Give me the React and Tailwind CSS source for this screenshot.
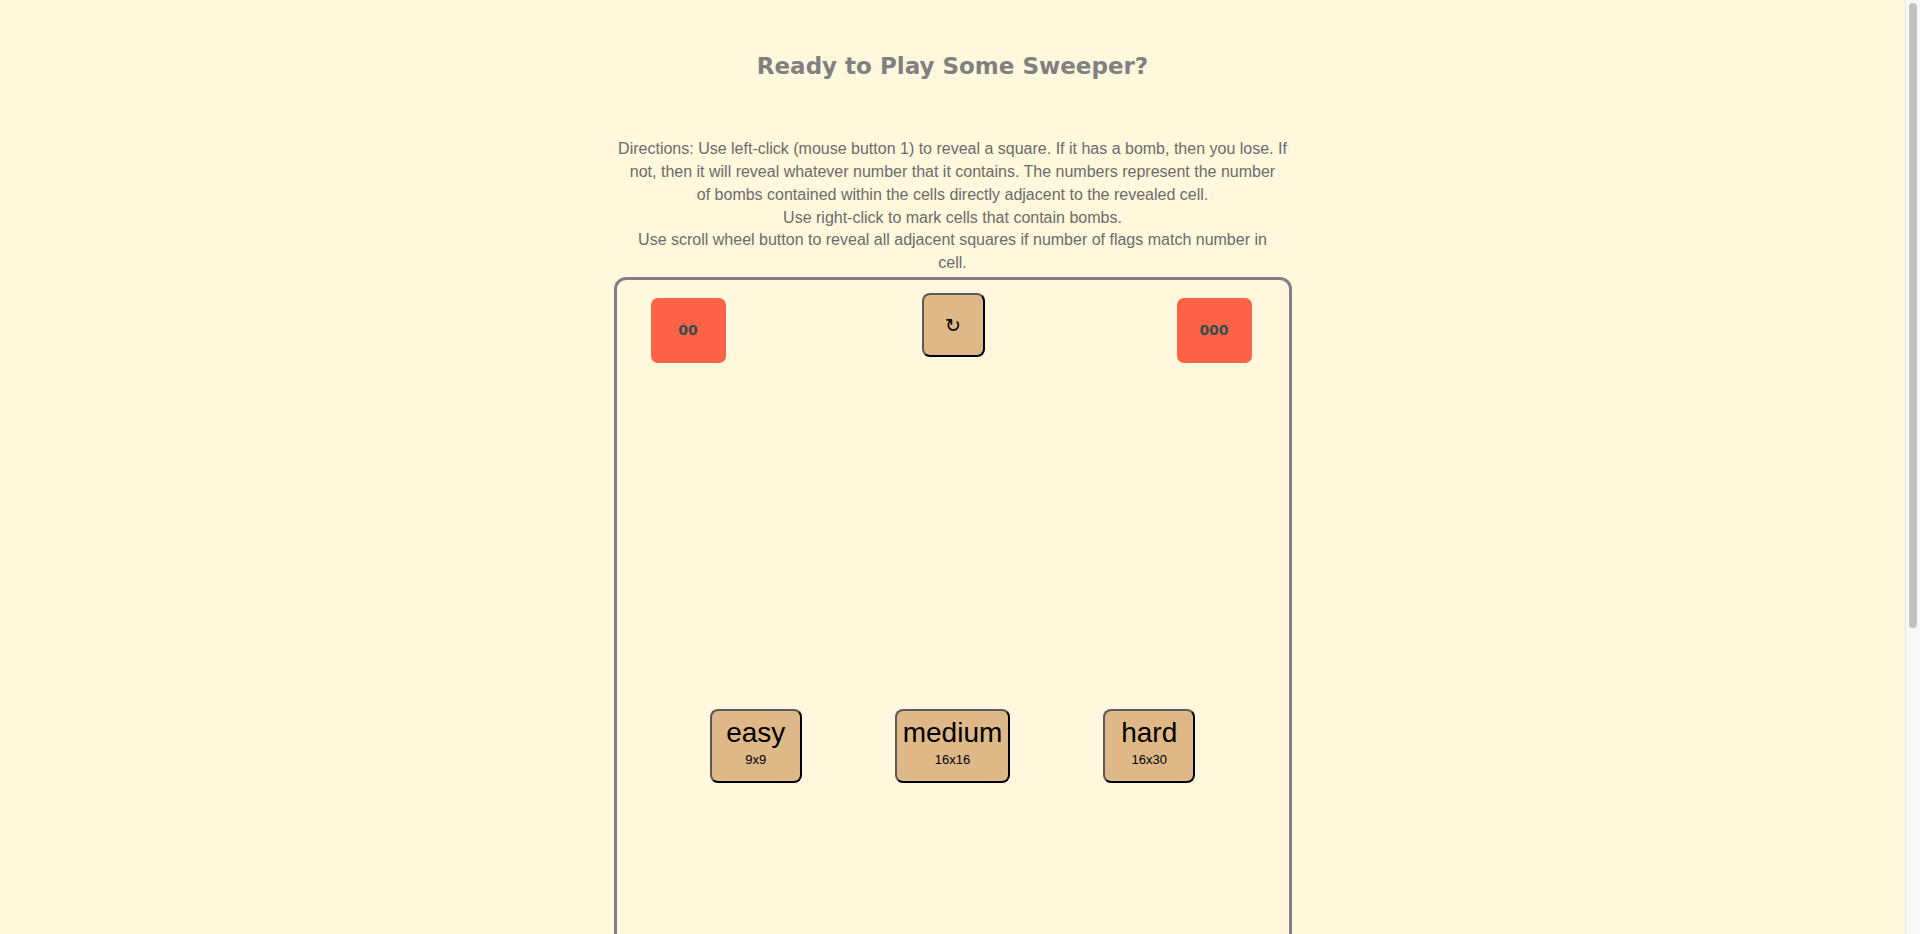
import React, { useState } from "react";

const directions = [
  "Directions: Use left-click (mouse button 1) to reveal a square. If it has a bomb, then you lose. If",
  "not, then it will reveal whatever number that it contains. The numbers represent the number",
  "of bombs contained within the cells directly adjacent to the revealed cell.",
  "Use right-click to mark cells that contain bombs.",
  "Use scroll wheel button to reveal all adjacent squares if number of flags match number in",
  "cell.",
];

const levels = [
  { name: "easy", size: "9x9", width: "w-[92px]" },
  { name: "medium", size: "16x16", width: "w-[115px]" },
  { name: "hard", size: "16x30", width: "w-[92px]" },
];

const Counter = ({ value }) => (
  <div className="mt-[18px] w-[75px] h-[65px] bg-[#ff6347] rounded-[7px] flex items-center justify-center">
    <span className="font-['DejaVu_Sans',sans-serif] font-bold text-[14px] text-[#2f4f4f]">{value}</span>
  </div>
);

const App = () => {
  const [level, setLevel] = useState(null);

  return (
    <div className="min-h-screen bg-[#fff8dc] pb-[20px] pr-[15px]">
      <div className="w-[678px] mx-auto">
        <h1 className="pt-[53px] text-center font-['DejaVu_Sans',sans-serif] font-bold text-[23px] leading-[27px] text-[#808080]">
          Ready to Play Some Sweeper?
        </h1>

        <p className="mt-[58px] text-center whitespace-nowrap font-['Liberation_Sans',Arial,sans-serif] text-[16px] leading-[22.85px] text-[#6b6b6b]">
          {directions.map((line, i) => (
            <span key={i} className="block">{line}</span>
          ))}
        </p>

        <div className="mt-[2px] h-[1090px] border-[3px] border-[#808080] rounded-[12px]">
          <div className="flex items-start justify-between pl-[34px] pr-[37px]">
            <Counter value="00" />
            <button
              type="button"
              onClick={() => setLevel(null)}
              className="mt-[13px] ml-[4px] w-[63px] h-[64px] bg-[#deb887] rounded-[8px] border-2 border-t-[#5a5a5a] border-l-[#5a5a5a] border-r-black border-b-black flex items-center justify-center font-['DejaVu_Sans',sans-serif] text-[19px] text-black"
            >
              ↻
            </button>
            <Counter value="000" />
          </div>

          <div className="mt-[346px] flex justify-evenly items-start">
            {levels.map((item) => (
              <button
                key={item.name}
                type="button"
                onClick={() => setLevel(item.name)}
                className={`${item.width} h-[74px] bg-[#deb887] rounded-[8px] border-2 border-t-[#5a5a5a] border-l-[#5a5a5a] border-r-black border-b-black flex flex-col items-center pt-[6px] font-['Liberation_Sans',Arial,sans-serif] text-black ${level === item.name ? "brightness-95" : ""}`}
              >
                <span className="text-[28px] leading-[32px]">{item.name}</span>
                <span className="mt-[3px] text-[13px] leading-[15px]">{item.size}</span>
              </button>
            ))}
          </div>
        </div>
      </div>

      {/* page scrollbar as it shows in the screenshot */}
      <div className="fixed top-0 right-0 h-screen w-[15px] bg-[#f8f8f8] border-l border-[#e6e6e6] pt-[3px] pl-[3px]">
        <div className="w-[8px] h-[625px] rounded-full bg-[#c1c1c1]" />
      </div>
    </div>
  );
};

export default App;
